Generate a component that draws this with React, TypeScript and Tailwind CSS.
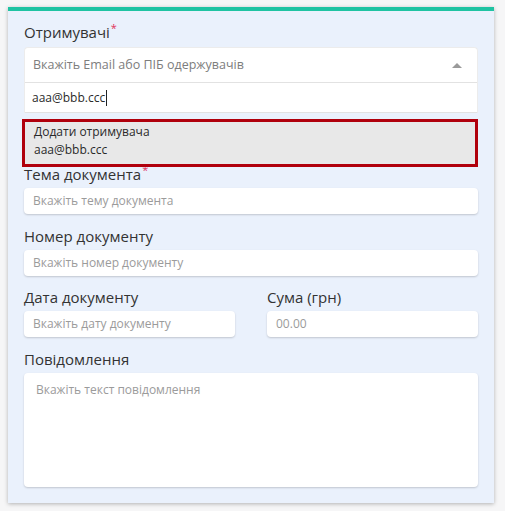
import React from "react";

const font = { fontFamily: '"Open Sans", "Noto Sans", sans-serif' };

function Label({ text, required, className = "" }: { text: string; required?: boolean; className?: string }) {
  return (
    <div className={"h-[22px] leading-[20px] text-[15px] text-[#333] flex items-start " + className}>
      <span>{text}</span>
      {required && <span className="text-[#e0335c] text-[11px] leading-[12px] ml-[1px]">*</span>}
    </div>
  );
}

function Field({ placeholder, className = "" }: { placeholder: string; className?: string }) {
  return (
    <div
      className={
        "h-[26px] bg-white rounded-[4px] shadow-[0_1px_2px_rgba(0,0,0,0.18)] flex items-center pl-[9px] text-[12px] text-[#9b9b9b] " +
        className
      }
    >
      {placeholder}
    </div>
  );
}

export default function App() {
  return (
    <div style={font} className="min-h-[511px] w-[505px] bg-[#f6f6f7] pt-[7px] pl-[8px]">
      <div className="w-[486px] bg-[#eaf1fc] border-t-4 border-[#1fc3a2] shadow-[0_1px_4px_rgba(0,0,0,0.28)] px-4 pt-[11px] pb-4">
        <Label text="Отримувачі" required />
        <div className="mt-[3px] bg-white rounded-t-[4px] border-x border-t border-[#ececec]">
          <div className="h-[35px] border-b border-[#e2e2e2] flex items-center justify-between pl-[8px] pr-[15px]">
            <span className="text-[12.5px] text-[#7d7d7d]">Вкажіть Email або ПІБ одержувачів</span>
            <svg width="10" height="5" viewBox="0 0 10 5">
              <path d="M0 5 L5 0 L10 5 Z" fill="#9a9a9a" />
            </svg>
          </div>
          <div className="h-[30px] border-b border-[#e2e2e2] flex items-center pl-[7px]">
            <span className="text-[12px] text-[#2a2a2a]">aaa@bbb.ccc</span>
            <span className="inline-block w-[1px] h-[16px] bg-[#222] ml-[1px]" />
          </div>
        </div>
        <div className="relative z-10 mt-[6px] ml-[-2px] w-[456px] h-[48px] border-[3px] border-[#b0000c] bg-[#e8e8e8] pl-[9px] pt-[1px] text-[12px] leading-[18px] text-[#2a2a2a]">
          <div>Додати отримувача</div>
          <div>aaa@bbb.ccc</div>
        </div>
        <Label text="Тема документа" required className="relative z-0 mt-[-3px]" />
        <Field placeholder="Вкажіть тему документа" className="mt-[2px]" />
        <Label text="Номер документу" className="mt-[12px]" />
        <Field placeholder="Вкажіть номер документу" className="mt-[2px]" />
        <div className="grid grid-cols-2 gap-x-[32px] mt-[11px]">
          <div>
            <Label text="Дата документу" />
            <Field placeholder="Вкажіть дату документу" className="mt-[2px]" />
          </div>
          <div>
            <Label text="Сума (грн)" />
            <Field placeholder="00.00" className="mt-[2px]" />
          </div>
        </div>
        <Label text="Повідомлення" className="mt-[12px]" />
        <div className="mt-[2px] h-[114px] bg-white rounded-[4px] shadow-[0_1px_2px_rgba(0,0,0,0.18)] pl-[12px] pt-[8px] text-[12px] leading-[18px] text-[#9b9b9b]">
          Вкажіть текст повідомлення
        </div>
      </div>
    </div>
  );
}
